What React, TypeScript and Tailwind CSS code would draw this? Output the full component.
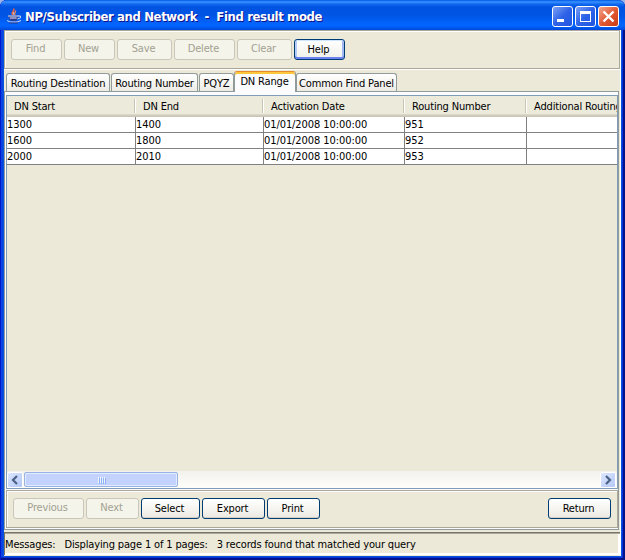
import React from "react";

function Btn({ label, w, state = "normal" }: { label: string; w: string; state?: "normal" | "disabled" | "focus" }) {
  const look =
    state === "disabled"
      ? "border-[#c9c7ba] bg-[#f5f4ea] text-[#a1a192] pb-px"
      : state === "focus"
      ? "border-[#003c74] bg-linear-to-b from-white to-[#f0f0ea] shadow-[inset_0_1px_0_#cee7ff,inset_0_-2px_0_#6982ee,inset_2px_0_0_#b4ccf8,inset_-2px_0_0_#a0b9f3] pt-px"
      : "border-[#003c74] bg-linear-to-b from-white via-[#f6f5f1] to-[#eae8e0] shadow-[inset_0_-1px_0_#d6d0c5] pt-px";
  return (
    <button className={`flex h-[21px] shrink-0 items-center justify-center rounded-[3px] border pr-[2px] ${w} ${look}`}>
      {label}
    </button>
  );
}

function Tab({ label, w }: { label: string; w: string }) {
  return (
    <div className={`flex h-[18px] shrink-0 items-center justify-center rounded-t-[3px] border border-b-0 border-[#919b9c] bg-linear-to-b from-white to-[#ecebe4] pt-[3px] ${w}`}>
      {label}
    </div>
  );
}

const headers = [
  ["DN Start", "w-[128px] pl-[7px]"],
  ["DN End", "w-[128px] pl-2"],
  ["Activation Date", "w-[141px] pl-2"],
  ["Routing Number", "w-[122px] pl-2"],
  ["Additional Routing", "w-[91px] pl-2"],
];
const rows = [
  ["1300", "1400", "01/01/2008 10:00:00", "951", ""],
  ["1600", "1800", "01/01/2008 10:00:00", "952", ""],
  ["2000", "2010", "01/01/2008 10:00:00", "953", ""],
];
const cellWidths = ["w-[129px]", "w-[128px]", "w-[141px]", "w-[122px]", "w-[90px]"];

function JavaCup() {
  return (
    <svg className="mt-[2px]" width="16" height="16" viewBox="0 0 16 16" fill="none">
      <path d="M6 7C3 4.500 8.500 3.500 6.500.5" stroke="#f06038" strokeWidth="1.600" />
      <path d="M8 7C6.500 5 9 4.500 8.500 2.500" stroke="#f58a55" strokeWidth="1.300" />
      <path d="M6.500 6.500C6 5.500 6.500 4.500 7 4" stroke="#ffe0c8" />
      <path d="M1.500 7.500h9.500v2.500L9 12.500H4L1.500 10Z" fill="#3d4a94" />
      <path d="M1 8h10.500M3 10h6.500M11 8h2.500v1.800l-3 1.200" stroke="#d4daf2" />
      <path d="M3.500 12h6" stroke="#252b70" />
      <path d="M0 12.500l3 1.500h7l4-1.500" stroke="#d1d7ee" />
      <path d="M2 15h9" stroke="#27378e" />
    </svg>
  );
}

function WinBtn({ kind }: { kind: "min" | "max" | "close" }) {
  const bg = kind === "close" ? "bg-linear-to-br from-[#f0a58c] via-[#e35a35] to-[#c83a10]" : "bg-linear-to-br from-[#7c9ff4] via-[#2e62e8] to-[#1f55e0]";
  return (
    <button className={`size-[21px] rounded-[3px] border border-white ${bg}`}>
      <svg width="19" height="19" viewBox="0 0 19 19" fill="none" stroke="white" shapeRendering={kind === "close" ? "auto" : "crispEdges"}>
        {kind === "min" && <path d="M4 13.500h7" strokeWidth="3" />}
        {kind === "max" && <path d="M4.500 5v9.500h10V5" />}
        {kind === "max" && <path d="M4 5.500h11" strokeWidth="3" />}
        {kind === "close" && <path d="M4.500 4.500l10 10M14.500 4.500l-10 10" strokeWidth="2.400" />}
      </svg>
    </button>
  );
}

function ScrollArrow({ right = false }: { right?: boolean }) {
  return (
    <button className="flex size-[16px] shrink-0 items-center justify-center rounded-[2px] border border-white bg-linear-to-br from-[#dce6ff] to-[#b4c8f6]">
      <svg width="8" height="10" viewBox="0 0 8 10" fill="none" stroke="#4d6185" strokeWidth="2.200">
        <path d={right ? "M2 1l4 4-4 4" : "M6 1L2 5l4 4"} />
      </svg>
    </button>
  );
}

export default function App() {
  return (
    <div className="h-[560px] w-[625px] overflow-hidden bg-[#9db4e8] font-['DejaVu_Sans_Condensed','DejaVu_Sans',sans-serif] text-[11px] leading-[14px] tracking-[-0.17px] whitespace-pre text-black [font-stretch:condensed]">
      <div className="flex h-[560px] flex-col rounded-t-[7px] bg-[#0855dd] shadow-[inset_1px_0_0_#0019cf,inset_-2px_-2px_0_#00138c,inset_-3px_-3px_0_#0831d9,inset_3px_0_0_#0a45e2]">
        <header className="flex h-[30px] shrink-0 items-center rounded-t-[7px] bg-[linear-gradient(to_bottom,#0058e6_0,#3a93ff_2px,#1269f0_4px,#0053e1_7px,#0055e5_16px,#0263fc_23px,#0264ff_26px,#0048d8_30px)] pr-[6px] pl-[7px]">
          <JavaCup />
          <h1 className="ml-[2px] pt-[3px] text-[13px] font-bold tracking-[-0.39px] text-white [text-shadow:1px_1px_0_#0f1089]">NP/Subscriber and Network  -  Find result mode</h1>
          <div className="ml-auto flex gap-[2px] pt-[2px]">
            <WinBtn kind="min" />
            <WinBtn kind="max" />
            <WinBtn kind="close" />
          </div>
        </header>

        <main className="mx-1 mb-1 flex min-h-0 w-[617px] flex-1 flex-col border-r border-white bg-[#ece9d8]">
          <section className="flex h-[39px] w-[616px] shrink-0 gap-[2px] border border-[#aca899] pt-2 pl-[6px] shadow-[inset_1px_1px_0_#fff,0_1px_0_#fff]">
            <Btn label="Find" w="w-[51px]" state="disabled" />
            <Btn label="New" w="w-[51px]" state="disabled" />
            <Btn label="Save" w="w-[55px]" state="disabled" />
            <Btn label="Delete" w="w-[61px]" state="disabled" />
            <Btn label="Clear" w="w-[55px]" state="disabled" />
            <Btn label="Help" w="w-[51px]" state="focus" />
          </section>

          <nav className="flex h-[22px] shrink-0 items-end pl-[2px]">
            <Tab label="Routing Destination" w="w-[104px]" />
            <div className="w-px" />
            <Tab label="Routing Number" w="w-[87px]" />
            <div className="w-px" />
            <Tab label="PQYZ" w="w-[35px]" />
            <div className="z-10 -mb-px flex h-[21px] w-[62px] shrink-0 items-start justify-center rounded-t-[3px] border border-b-0 border-[#919b9c] border-t-[#e68b2c] bg-[#fcfcfe] pt-[3px] pr-px shadow-[inset_0_2px_0_#ffc73c]">DN Range</div>
            <Tab label="Common Find Panel" w="w-[101px]" />
          </nav>

          <section className="flex h-[439px] w-[615px] shrink-0 flex-col border border-[#919b9c] bg-[#fcfcfe] pt-[3px] pl-px">
            <div className="flex h-[394px] w-[612px] shrink-0 flex-col overflow-hidden border border-[#7f9db9] bg-[#ece9d8]">
              <div className="flex h-[21px] shrink-0 bg-[linear-gradient(to_bottom,#ebeadb_0,#ebeadb_18px,#e2decd_18px,#d6d2c2_19px,#cbc7b8_20px,#cbc7b8_21px)] pt-[3px]">
                {headers.map(([h, c], i) => (
                  <div key={h} className={`h-[14px] shrink-0 pt-px ${i < 4 ? "border-r border-[#c7c5b2] shadow-[1px_0_0_#fff]" : ""} ${c}`}>{h}</div>
                ))}
              </div>
              {rows.map((r) => (
                <div key={r[0]} className="flex h-4 shrink-0 border-b border-[#808080] bg-white">
                  {r.map((v, i) => (
                    <div key={i} className={`shrink-0 pt-px tracking-[-0.08px] ${i < 4 ? "border-r border-[#808080]" : ""} ${cellWidths[i]}`}>{v}</div>
                  ))}
                </div>
              ))}
              <div className="mt-auto flex h-[17px] shrink-0 items-center bg-linear-to-b from-[#f3f1ec] to-[#fefefb]">
                <ScrollArrow />
                <div className="ml-px flex h-[15px] w-[154px] items-center justify-center gap-px rounded-[2px] border border-[#98b4e6] bg-[#c3d3fd] shadow-[inset_0_0_0_1px_#e3ecff]">
                  {[0, 1, 2, 3].map((n) => <i key={n} className="h-[6px] w-px bg-[#eef4fe] shadow-[1px_1px_0_#8cb0f8]" />)}
                </div>
                <div className="mr-px ml-auto"><ScrollArrow right /></div>
              </div>
            </div>
            <div className="mt-px flex h-[38px] w-[612px] shrink-0 gap-[2px] border border-[#aca899] bg-[#ece9d8] pt-[7px] pr-[6px] pl-[6px] shadow-[inset_1px_1px_0_#fff]">
              <Btn label="Previous" w="w-[71px]" state="disabled" />
              <Btn label="Next" w="w-[53px]" state="disabled" />
              <Btn label="Select" w="w-[59px]" />
              <Btn label="Export" w="w-[63px]" />
              <Btn label="Print" w="w-[53px]" />
              <div className="ml-auto"><Btn label="Return" w="w-[63px]" /></div>
            </div>
          </section>

          <footer className="mt-[2px] flex h-[23px] shrink-0 items-center border-t border-l border-[#77756a] pt-[2px] tracking-[-0.15px] shadow-[inset_0_1px_0_#aca899,inset_-2px_-2px_0_#fff]">
            Messages:   Displaying page 1 of 1 pages:   3 records found that matched your query
          </footer>
        </main>
      </div>
    </div>
  );
}
